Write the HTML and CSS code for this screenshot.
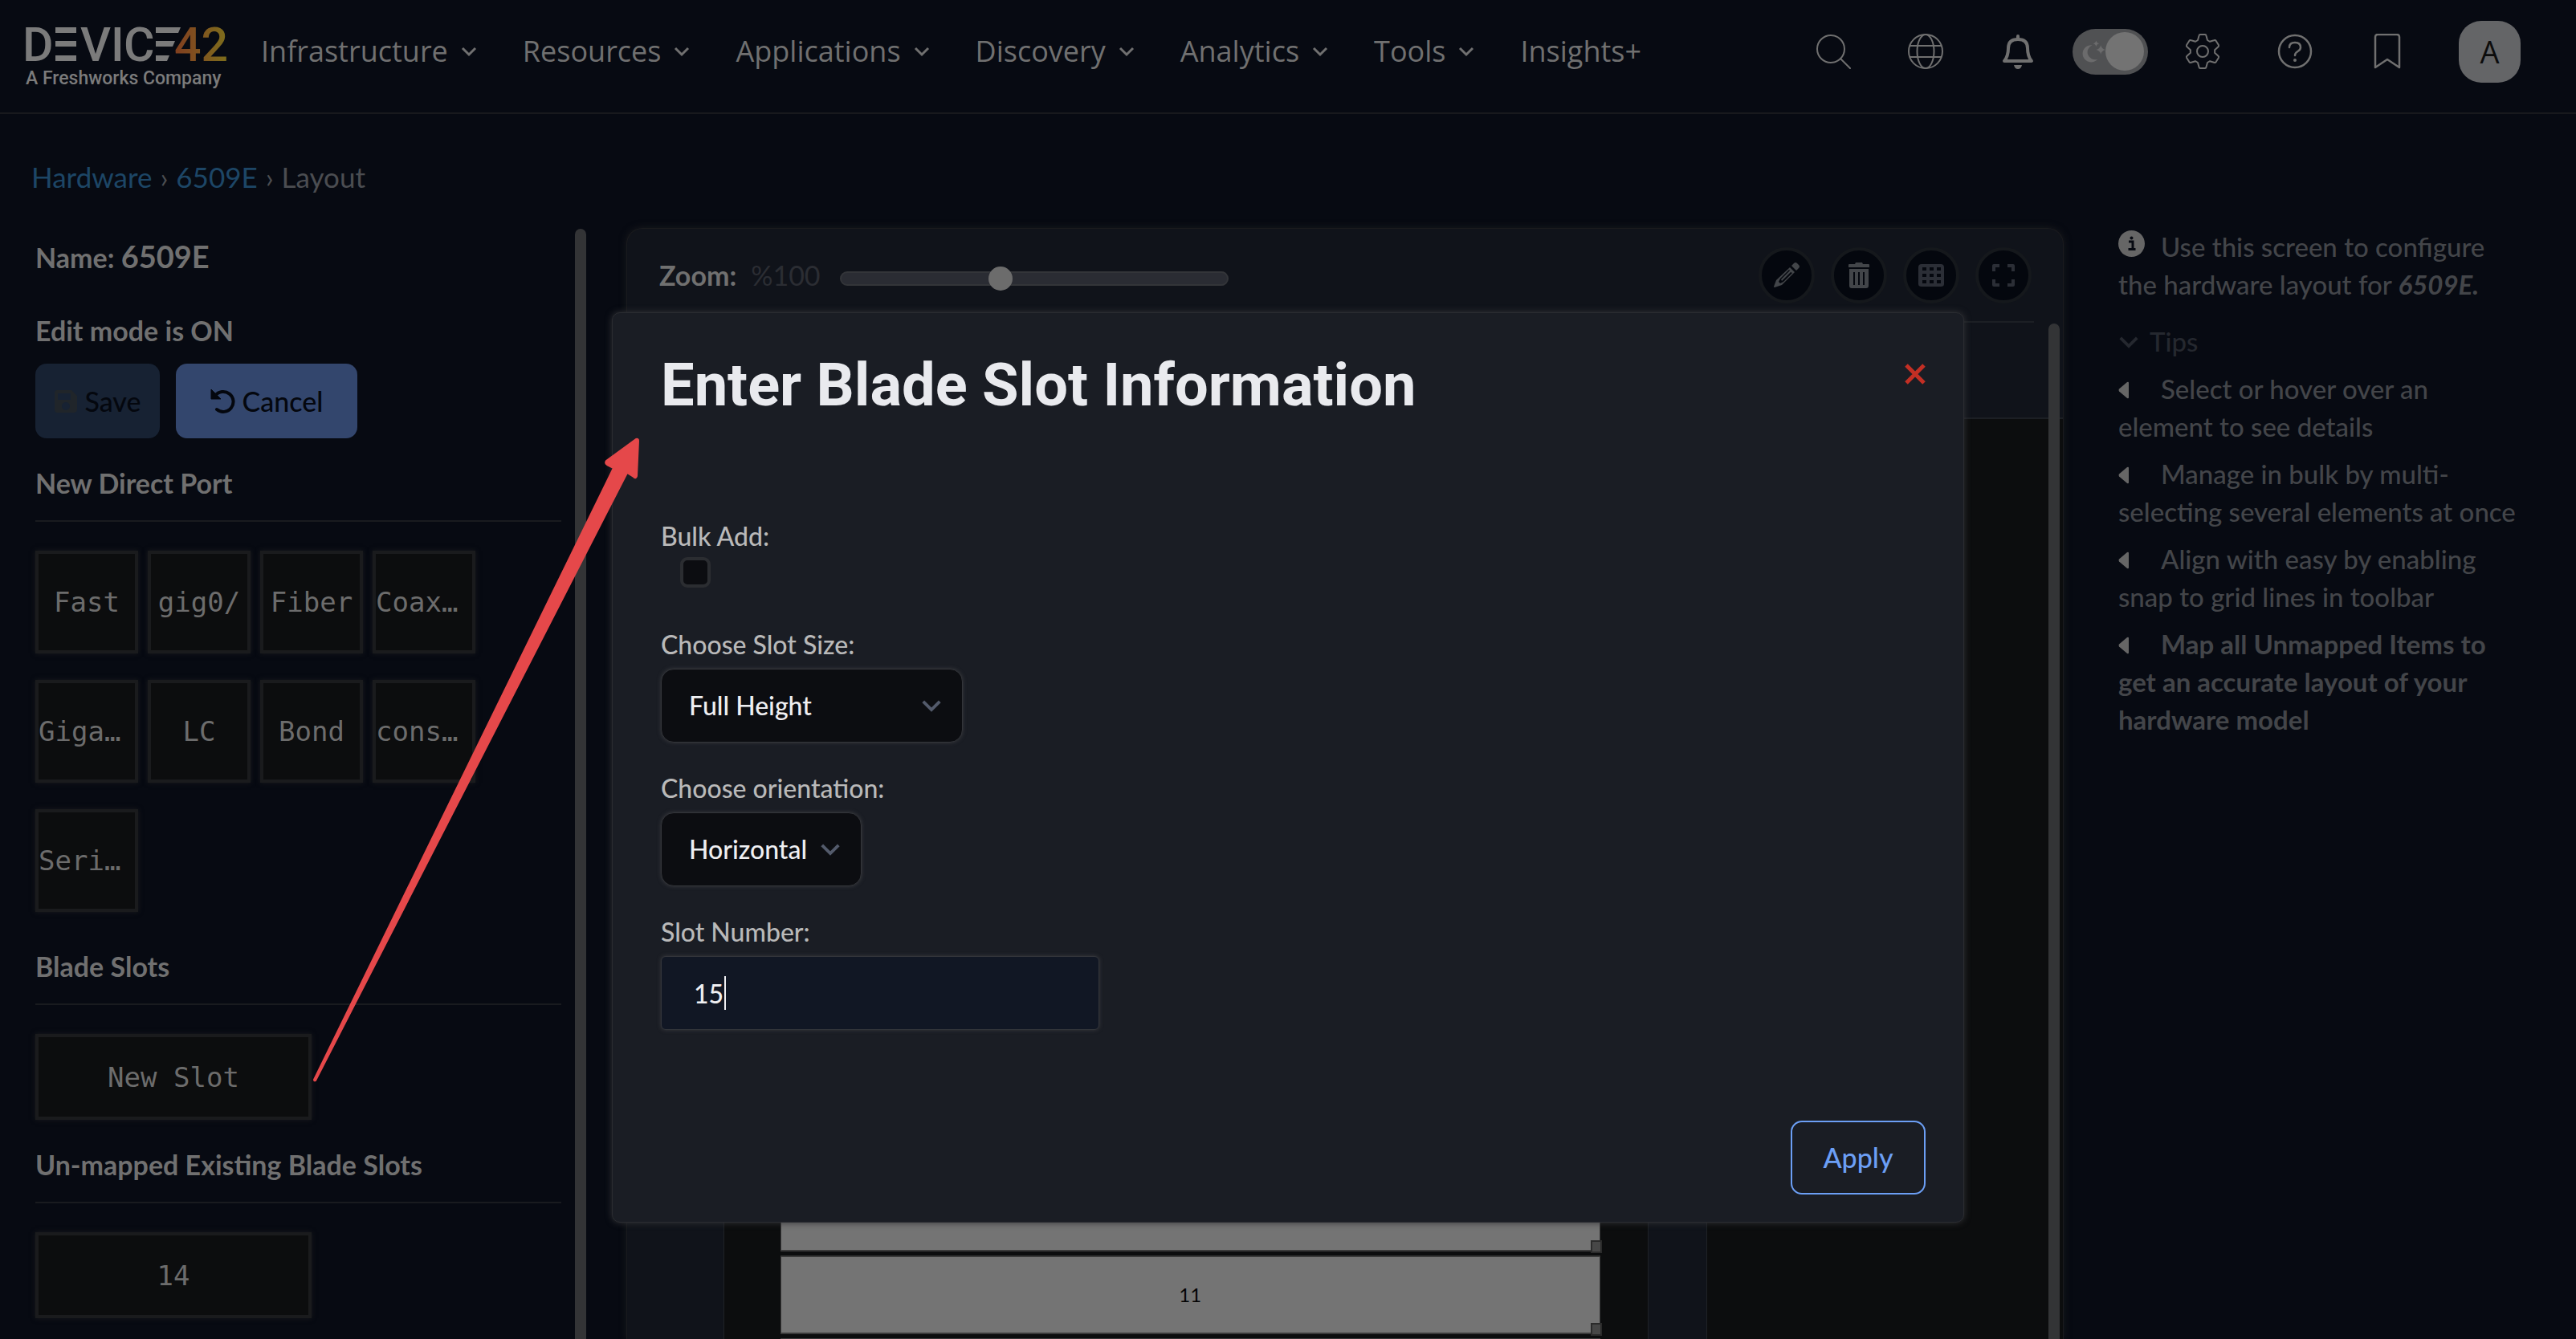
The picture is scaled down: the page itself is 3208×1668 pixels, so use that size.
FILE: index.html
```html
<!DOCTYPE html>
<html lang="en">
<head>
<meta charset="utf-8">
<title>6509E Layout - Device42</title>
<link rel="stylesheet" href="styles.css">
</head>
<body>
<svg class="defs" width="0" height="0" aria-hidden="true">
  <symbol id="chev" viewBox="0 0 20 14"><path d="M2 3l8 8 8-8" fill="none" stroke="currentColor" stroke-width="3"/></symbol>
  <symbol id="tri" viewBox="0 0 14 22"><path d="M13 2v18q0 2-2 1L1 12.500q-1-1.500 0-3L11 1q2-1 2 1z" fill="currentColor"/></symbol>
</svg>

<header class="topbar">
  <a class="logo" href="#" aria-label="Device42, A Freshworks Company">
    <svg width="252" height="92" viewBox="31 18 252 92">
      <defs><linearGradient id="g42" gradientUnits="userSpaceOnUse" x1="221" y1="0" x2="281" y2="0"><stop offset="0" stop-color="#80401f"/><stop offset=".5" stop-color="#80551f"/><stop offset="1" stop-color="#7d6c1c"/></linearGradient></defs>
      <g fill="#7b7b7b">
        <g class="word"><text x="28" y="76">D</text><text x="100" y="76">V</text><text x="138" y="76">I</text><text x="154" y="76">C</text></g>
        <path d="M69 34h26v7H69zM69 51h26v7H69zM69 69h26v7H69zM194 34h31l-3 7h-28zM194 51h24l-3 7h-21zM194 69h17l-3 7h-14z"/>
        <text class="tag" x="32" y="105">A Freshworks Company</text>
      </g>
      <g class="word" fill="url(#g42)"><text x="217" y="76">42</text></g>
    </svg>
  </a>
  <nav class="menu">
    <a href="#">Infrastructure<svg><use href="#chev"/></svg></a>
    <a href="#">Resources<svg><use href="#chev"/></svg></a>
    <a href="#">Applications<svg><use href="#chev"/></svg></a>
    <a href="#">Discovery<svg><use href="#chev"/></svg></a>
    <a href="#">Analytics<svg><use href="#chev"/></svg></a>
    <a href="#">Tools<svg><use href="#chev"/></svg></a>
    <a href="#">Insights+</a>
  </nav>
  <div class="actions">
    <button class="icon" aria-label="Search"><svg viewBox="0 0 44 44"><g fill="none" stroke="currentColor" stroke-width="2" stroke-linecap="round"><circle cx="19" cy="19" r="17"/><path d="M31 31l12 12"/></g></svg></button>
    <button class="icon" aria-label="Language"><svg viewBox="0 0 44 44"><g fill="none" stroke="currentColor" stroke-width="2"><circle cx="22" cy="22" r="21"/><ellipse cx="22" cy="22" rx="10.500" ry="21"/><path d="M2 15h40M2 29h40"/></g></svg></button>
    <button class="icon" aria-label="Notifications"><svg viewBox="0 0 44 44"><path d="M5 34q5-6 5-16Q10 7 22 7t12 11q0 10 5 16z" fill="none" stroke="currentColor" stroke-width="4" stroke-linejoin="round"/><path d="M20 6V3q0-2 2-2t2 2v3zM17 39h10q-1 5-5 5t-5-5z" fill="currentColor"/></svg></button>
    <button class="toggle" aria-label="Dark mode"><svg viewBox="0 0 30 30"><path d="M13 7A11 11 0 1 0 20 25 9 9 0 0 1 13 7z"/><path d="M18 1q.500 3 4 4-3.500 1-4 4-.500-3-4-4 3.500-1 4-4zM24 7q1 5 6 6-5 1-6 6-1-5-6-6 5-1 6-6z"/></svg><span class="knob"></span></button>
    <button class="icon" aria-label="Settings"><svg viewBox="-22 -22 44 44"><g fill="none" stroke="currentColor" stroke-width="2" stroke-linejoin="round"><path d="M-6-14l1.500-5.500Q-4.200-21-3-21h6q1.200 0 1.500 1.500L6-14Q7.500-13 9.100-12.200l5-1.500q1.800-.600 2.600.600l3.200 5.200q.600 1.300-.400 2.200L15.100-1.800q.200 1.800 0 3.600l4.400 3.900q1 .900.400 2.200l-3.200 5.200q-.800 1.200-2.600.600l-5-1.500Q7.500 13 6 14l-1.500 5.500Q4.200 21 3 21h-6q-1.200 0-1.500-1.500L-6 14q-1.500-1-3.100-1.800l-5 1.500q-1.800.600-2.600-.600l-3.200-5.200q-.600-1.300.400-2.200l4.400-3.900q-.200-1.800 0-3.600l-4.400-3.900q-1-.900-.400-2.200l3.200-5.200q.800-1.200 2.600-.600l5 1.500Q-7.500-13-6-14z"/><circle r="7"/></g></svg></button>
    <button class="icon" aria-label="Help"><svg viewBox="0 0 44 44"><g fill="none" stroke="currentColor" stroke-width="2.500" stroke-linecap="round"><circle cx="22" cy="22" r="20"/><path d="M15 17q0-6 7-6t7 6q0 3-3.500 5T22 27"/></g><circle cx="22" cy="33" r="2" fill="currentColor"/></svg></button>
    <button class="icon" aria-label="Bookmarks"><svg viewBox="0 0 44 44"><path d="M7 42V4q0-3 3-3h24q3 0 3 3v38L22 32z" fill="none" stroke="currentColor" stroke-width="2.500" stroke-linejoin="round"/></svg></button>
  </div>
  <button class="avatar">A</button>
</header>

<nav class="crumbs" aria-label="Breadcrumb"><a href="#">Hardware</a><span>›</span><a href="#">6509E</a><span>›</span>Layout</nav>

<main class="workspace">
  <aside class="side">
    <div class="side-body">
      <p class="name">Name: <span>6509E</span></p>
      <p class="mode">Edit mode is ON</p>
      <div class="buttons">
        <button class="btn save" disabled><svg width="30" height="30" viewBox="0 0 30 30"><path d="M4 1h18l7 7v17q0 4-4 4H4q-3 0-3-4V5q0-4 3-4zm1 4v8h16V5zm10 11a5 5 0 1 0 0 10 5 5 0 0 0 0-10z" fill="#20252a" fill-rule="evenodd"/></svg>Save</button>
        <button class="btn cancel"><svg width="32" height="32" viewBox="0 0 32 32"><path d="M6 9A12.500 12.500 0 1 1 8 26" fill="none" stroke="currentColor" stroke-width="4" stroke-linecap="round"/><path d="M1 1v12h12z" fill="currentColor" stroke="currentColor" stroke-linejoin="round"/></svg>Cancel</button>
      </div>
      <h2>New Direct Port</h2>
      <div class="ports">
        <button class="chip">Fast</button><button class="chip">gig0/</button><button class="chip">Fiber</button><button class="chip cut">Coax…</button>
        <button class="chip cut">Giga…</button><button class="chip">LC</button><button class="chip">Bond</button><button class="chip cut">cons…</button>
        <button class="chip cut">Seri…</button>
      </div>
      <h2>Blade Slots</h2>
      <button class="chip wide">New Slot</button>
      <h2>Un-mapped Existing Blade Slots</h2>
      <button class="chip wide">14</button>
    </div>
    <div class="thumb"></div>
  </aside>

  <section class="board">
    <div class="tools">
      <label for="zoom">Zoom:</label><output>%100</output>
      <input id="zoom" type="range" min="0" max="240" value="98">
      <div class="round-set">
        <button class="round" aria-label="Edit"><svg viewBox="0 0 34 34"><path d="M26 2q2-2 4 0l2 2q2 2 0 4l-3 3-6-6zM21 7l6 6L11 29l-9 3q-1 0-1-1l3-8zM9 21l-2 4 2 2 4-2 11-11-2-1L11 24l-1-2 11-11-1-1z" fill="currentColor" fill-rule="evenodd"/></svg></button>
        <button class="round" aria-label="Delete"><svg viewBox="0 0 34 34"><path d="M4 4q0-1 1-1h7l1-2h8l1 2h7q1 0 1 1v3H4zM5 9h24v21q0 3-3 3H8q-3 0-3-3zM10 13v16h2V13zm6 0v16h2V13zm6 0v16h2V13z" fill="currentColor" fill-rule="evenodd"/></svg></button>
        <button class="round dim" aria-label="Grid"><svg viewBox="0 0 34 34"><path d="M5 3h24q4 0 4 4v21q0 3-4 3H5q-4 0-4-3V7q0-4 4-4zm1 4v4h5V7zm9 0v4h5V7zm9 0v4h5V7zM6 15v4h5v-4zm9 0v4h5v-4zm9 0v4h5v-4zM6 23v4h5v-4zm9 0v4h5v-4zm9 0v4h5v-4z" fill="currentColor" fill-rule="evenodd"/></svg></button>
        <button class="round dim" aria-label="Fullscreen"><svg viewBox="0 0 34 34"><path d="M12 5H5v7M22 5h7v7M12 29H5v-7M22 29h7v-7" fill="none" stroke="currentColor" stroke-width="4" stroke-linejoin="round"/></svg></button>
      </div>
    </div>
    <div class="stage">
      <div class="rack">
        <div class="slot"></div><div class="slot"></div><div class="slot"></div><div class="slot"></div><div class="slot"></div>
        <div class="slot"></div><div class="slot"></div><div class="slot"></div><div class="slot"></div><div class="slot"></div>
        <div class="slot">11</div><div class="slot"></div>
      </div>
      <div class="rack-rear"></div>
    </div>
    <div class="thumb board-thumb"></div>
  </section>

  <aside class="help">
    <p><span class="lead"><svg width="33" height="33" viewBox="0 0 33 33"><circle cx="16.500" cy="16.500" r="16.500" fill="currentColor"/><path d="M13 14h5v9M12.500 23.500h9" fill="none" stroke="#070a12" stroke-width="3"/><circle cx="16.500" cy="9.500" r="2" fill="#070a12"/></svg></span>Use this screen to configure the hardware layout for <strong><em>6509E.</em></strong></p>
    <p class="tips"><svg width="26" height="18"><use href="#chev"/></svg>Tips</p>
    <p><span class="lead"><svg width="14" height="22"><use href="#tri"/></svg></span>Select or hover over an element to see details</p>
    <p><span class="lead"><svg width="14" height="22"><use href="#tri"/></svg></span>Manage in bulk by multi-selecting several elements at once</p>
    <p><span class="lead"><svg width="14" height="22"><use href="#tri"/></svg></span>Align with easy by enabling snap to grid lines in toolbar</p>
    <p><span class="lead"><svg width="14" height="22"><use href="#tri"/></svg></span><strong>Map all Unmapped Items to get an accurate layout of your hardware model</strong></p>
  </aside>
</main>

<div class="modal" role="dialog" aria-labelledby="title">
  <div class="modal-head">
    <h1 id="title">Enter Blade Slot Information</h1>
    <button class="close" aria-label="Close"><svg width="26" height="26" viewBox="0 0 26 26"><path d="M2 2l22 22M24 2L2 24" stroke="#c32f24" stroke-width="5"/></svg></button>
  </div>
  <form>
    <label for="bulk">Bulk Add:</label>
    <input id="bulk" type="checkbox">
    <label for="size">Choose Slot Size:</label>
    <div class="pick size"><select id="size"><option>Full Height</option></select><svg width="26" height="18"><use href="#chev"/></svg></div>
    <label for="orient">Choose orientation:</label>
    <div class="pick orient"><select id="orient"><option>Horizontal</option></select><svg width="26" height="18"><use href="#chev"/></svg></div>
    <label for="num">Slot Number:</label>
    <div class="entry"><input id="num" type="text" value="15"><span class="caret"></span></div>
    <button class="apply" type="button">Apply</button>
  </form>
</div>

<svg class="arrow" width="420" height="810" viewBox="380 540 420 810" aria-hidden="true"><path d="M391 1345L764 583l-8-4q-3-2-1-5l37-27q3-1 3 2l-2 44q-1 4-4 1l-8-5L393 1346q-2 1-2-1z" fill="#e5484a" stroke="#e5484a" stroke-width="2" stroke-linejoin="round"/></svg>
</body>
</html>
```
FILE: styles.css
```css
* { box-sizing: border-box; }
html, body { height: 100%; }
body {
  margin: 0;
  display: flex;
  flex-direction: column;
  overflow: hidden;
  position: relative;
  background: #070a12;
  color: #707070;
  font: 34px/44px Lato, "Noto Sans", sans-serif;
}
p, h1, h2 { margin: 0; }
a { color: inherit; text-decoration: none; }
button { font: inherit; color: inherit; border: 0; padding: 0; background: none; }
svg { display: block; }
.defs { position: absolute; }

.topbar {
  flex: none;
  height: 142px;
  display: flex;
  align-items: center;
  padding: 0 69px 12px 31px;
  border-bottom: 2px solid #18191d;
}
.logo svg { overflow: visible; }
.word { font: 500 59px Roboto, sans-serif; }
.tag { font: 500 23px Roboto, sans-serif; }
.menu {
  display: flex;
  gap: 57px;
  margin-left: 42px;
  font: 36px/50px "Open Sans", sans-serif;
}
.menu a { display: flex; align-items: center; gap: 16px; }
.menu svg { width: 20px; height: 14px; }
.actions { display: flex; align-items: center; gap: 21px; margin-left: auto; }
.icon { width: 94px; display: grid; justify-items: center; }
.icon svg { width: 44px; height: 44px; }
.toggle {
  width: 94px;
  height: 57px;
  border-radius: 29px;
  background: #505153;
  display: flex;
  align-items: center;
  justify-content: space-between;
  padding: 0 5px 0 12px;
}
.toggle svg { width: 29px; height: 30px; fill: #6b6b6c; }
.knob { width: 48px; height: 48px; border-radius: 50%; background: #737373; }
.avatar {
  width: 77px;
  height: 77px;
  margin-left: 42px;
  border-radius: 28px;
  background: #646567;
  color: #0c0c0c;
  font: 38px "Open Sans", sans-serif;
}

.crumbs { flex: none; height: 142px; padding: 56px 39px 0; color: #4b4d51; font-size: 35px; }
.crumbs a { color: #1d4666; }
.crumbs span { margin: 0 10px; }

.workspace { flex: 1; min-height: 0; display: flex; }

.side { width: 730px; flex: none; display: flex; padding-top: 1px; }
.side-body { flex: 1; padding: 12px 17px 0 44px; font-weight: 700; }
.thumb { width: 14px; border-radius: 8px 8px 0 0; background: #333436; }
.name span { font-size: 38px; }
.mode { margin-top: 47px; }
.buttons { display: flex; gap: 20px; margin-top: 19px; }
.btn {
  height: 93px;
  border-radius: 14px;
  display: flex;
  align-items: center;
  justify-content: center;
  gap: 8px;
  color: #04070e;
  font-weight: 500;
}
.save { width: 155px; background: #172233; }
.cancel { width: 226px; background: #33466d; }
h2 {
  margin: 34px 0 36px;
  padding-bottom: 24px;
  border-bottom: 2px solid #191b1f;
  font: inherit;
}
.ports { display: grid; grid-template-columns: repeat(4, 128px); gap: 33px 12px; padding-bottom: 12px; }
.chip {
  width: 128px;
  height: 128px;
  border: 4px solid #1a1b1d;
  box-shadow: 0 0 6px #1a1b1d;
  background: #0c0d0e;
  color: #6c6c6c;
  font: 34px "DejaVu Sans Mono", monospace;
  white-space: nowrap;
}
.cut { text-align: left; }
.wide { display: block; width: 344px; height: 107px; }

.board {
  flex: 1;
  margin: 0 68px 0 50px;
  position: relative;
  display: flex;
  flex-direction: column;
  border: 1px solid #1a1b1e;
  border-bottom: 0;
  border-radius: 20px 20px 0 0;
  box-shadow: 0 0 10px #1a1b1e;
  background: #10131a;
}
.tools {
  flex: none;
  height: 117px;
  margin: 0 36px 0 40px;
  padding-right: 3px;
  display: flex;
  align-items: center;
  border-bottom: 2px solid #1c1f24;
}
.tools label { font-weight: 700; }
.tools output { margin: 0 24px 0 18px; color: #2b2d33; }
.tools input {
  appearance: none;
  width: 484px;
  height: 18px;
  margin: 8px 0 0;
  border: 2px solid #333539;
  border-radius: 9px;
  background: #2a2c33;
}
.tools input::-webkit-slider-thumb {
  appearance: none;
  width: 30px;
  height: 30px;
  border-radius: 50%;
  background: #6c6c6c;
}
.round-set { display: flex; gap: 20px; margin-left: auto; }
.round {
  width: 70px;
  height: 70px;
  border: 4px solid #15181c;
  border-radius: 50%;
  background: #04070e;
  color: #424549;
  display: grid;
  place-items: center;
}
.round svg { width: 34px; height: 34px; }
.dim { color: #2b2e36; }
.stage {
  flex: 1;
  min-height: 0;
  margin: 118px 0 0 120px;
  display: grid;
  grid-template-columns: 1153fr 445fr;
  gap: 72px;
  border-top: 2px solid #1c1f24;
}
.rack, .rack-rear { border: solid #1f2226; border-width: 0 1px; background: #0c0d0e; min-height: 0; }
.rack { display: flex; flex-direction: column; gap: 5px; padding: 12px 59px 0 70px; overflow: hidden; }
.rack-rear { border-right: 0; }
.slot {
  flex: none;
  height: 98px;
  position: relative;
  border: solid #3a3a3a;
  border-width: 2px 1px;
  background: #747474;
  color: #040404;
  font-size: 24px;
  line-height: 94px;
  text-align: center;
}
.slot::after {
  content: "";
  position: absolute;
  right: -3px;
  bottom: -4px;
  width: 10px;
  height: 12px;
  border: 2px solid #2b2b2b;
  background: #474747;
}
.board-thumb { position: absolute; top: 118px; right: 4px; bottom: 0; }

.help { flex: none; width: 570px; padding-right: 64px; color: #434549; font-size: 33px; line-height: 47px; font-weight: 500; }
.help p + p { margin-top: 12px; }
.help p.tips { display: flex; align-items: center; gap: 13px; margin-top: 24px; color: #25282f; }
.lead { display: inline-block; width: 53px; color: #666; }

.modal {
  position: absolute;
  top: 389px;
  left: 0;
  right: 0;
  width: 1684px;
  margin: 0 auto;
  padding: 46px 47px 34px 60px;
  border: 1px solid #2a2c31;
  border-radius: 10px;
  box-shadow: 0 0 8px #333437;
  background: #1a1d24;
  color: #b9b9b9;
  font-size: 32px;
  line-height: 40px;
  font-weight: 500;
}
.modal-head { display: flex; justify-content: space-between; align-items: flex-start; margin-bottom: 124px; }
h1 { font: 700 74px/88px Roboto, sans-serif; color: #e9eaee; }
.close { height: 60px; display: grid; place-items: center; }
form { display: flex; flex-direction: column; align-items: flex-start; }
form label { margin-bottom: 10px; }
.pick, .entry { display: grid; align-items: center; margin-bottom: 37px; }
.pick > *, .entry > * { grid-area: 1 / 1; }
.pick svg { justify-self: end; margin-right: 26px; color: #535a6b; }
.size { width: 376px; }
.orient { width: 250px; }
.entry { width: 546px; }
select, .entry input {
  appearance: none;
  width: 100%;
  height: 92px;
  border: 1px solid #33353a;
  box-shadow: 0 0 5px #3a3b3f;
  font: inherit;
  color: #efeff2;
}
select { padding: 0 34px; border-radius: 16px; background: #0c0d11; }
.entry input { padding: 0 40px; border-radius: 6px; background: #111724; }
.caret { width: 2px; height: 42px; margin-left: 79px; background: #efeff2; }
input[type="checkbox"] {
  appearance: none;
  width: 38px;
  height: 38px;
  margin: 0 0 51px 24px;
  border: 4px solid #2b2d31;
  border-radius: 9px;
  background: #0c0d11;
}
form label[for="bulk"] { margin-bottom: 6px; }
.apply {
  align-self: flex-end;
  width: 168px;
  height: 92px;
  margin-top: 76px;
  border: 2px solid #6c9ff5;
  border-radius: 14px;
  color: #6c9ff5;
  font-size: 34px;
}

.arrow { position: absolute; left: 380px; top: 540px; pointer-events: none; }
```
